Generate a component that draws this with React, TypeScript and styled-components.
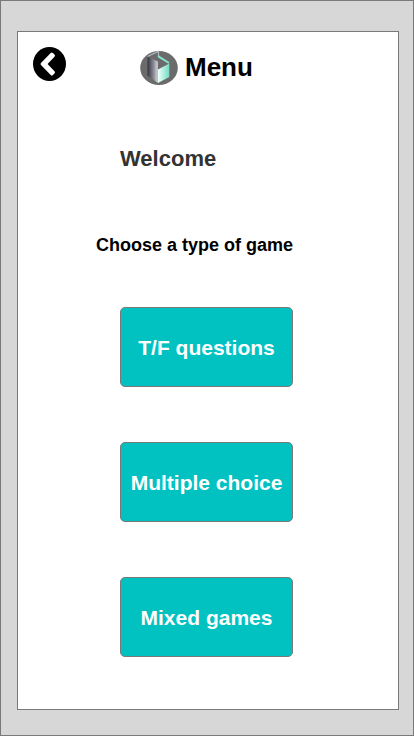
import React from "react";
import styled, { createGlobalStyle } from "styled-components";

const GlobalStyle = createGlobalStyle`
  * { box-sizing: border-box; }
  body { margin: 0; font-family: "Liberation Sans", Arial, sans-serif; }
`;

const Screen = styled.div`
  display: flex;
  width: 414px;
  height: 736px;
  padding: 30px 14px 25px 16px;
  border: 1px solid #797979;
  background: #d7d7d7;
`;

const Panel = styled.main`
  flex: 1;
  display: flex;
  flex-direction: column;
  border: 1px solid #797979;
  background: #fff;
`;

const Header = styled.header`
  display: flex;
  align-items: flex-start;
  height: 112px;
  padding: 14px 0 0 14px;
`;

const BackButton = styled.button`
  display: flex;
  margin: 0;
  padding: 0;
  border: 0;
  background: none;
`;

const Brand = styled.div`
  display: flex;
  align-items: flex-start;
  gap: 5px;
  margin: 4px 0 0 74px;
`;

const Title = styled.h1`
  margin: 2px 0 0;
  color: #000;
  font-size: 26px;
  line-height: 30px;
`;

const Welcome = styled.h2`
  margin: 2px 0 0 102px;
  color: #333;
  font-size: 22px;
  line-height: 25px;
`;

const Prompt = styled.p`
  margin: 64px 0 0 78px;
  color: #000;
  font-size: 18px;
  font-weight: 700;
  line-height: 20px;
`;

const GameList = styled.nav`
  display: flex;
  flex-direction: column;
  gap: 55px;
  margin: 52px 0 0 102px;
`;

const GameButton = styled.button`
  width: 173px;
  height: 80px;
  padding: 2px 0 0;
  border: 1px solid #797979;
  border-radius: 5px;
  background: #02c1c1;
  color: #fff;
  font: 700 21px/24px "Liberation Sans", Arial, sans-serif;
  white-space: nowrap;
`;

const games = ["T/F questions", "Multiple choice", "Mixed games"];

const BackIcon = () => (
  <svg width="34" height="36" viewBox="0 0 34 36">
    <ellipse cx="17.5" cy="18" rx="16.5" ry="17" fill="#000" />
    <path
      d="M18.7 6.9Q19.8 5.9 20.9 6.9L22.5 8.6Q23.5 9.6 22.5 10.7L15.6 18l6.9 7.3Q23.5 26.4 22.5 27.4L20.9 29.1Q19.8 30.1 18.7 29.1L9 19.1Q8 18 9 16.9Z"
      fill="#fff"
    />
  </svg>
);

const Logo = () => (
  <svg width="40" height="36" viewBox="0 0 40 36">
    <defs>
      <linearGradient id="side">
        <stop offset="0" stopColor="#343340" />
        <stop offset="0.6" stopColor="#8c8b98" />
        <stop offset="1" stopColor="#d8d8e2" />
      </linearGradient>
      <linearGradient id="front">
        <stop offset="0" stopColor="#effffa" />
        <stop offset="1" stopColor="#73dbc4" />
      </linearGradient>
    </defs>
    <ellipse cx="19" cy="18" rx="18.8" ry="17" fill="#6b6b6b" />
    <path d="M7.5 6.5 17.8 11.5V33L7.5 25.5Z" fill="url(#side)" />
    <path d="M18 19.5 29.3 13.5V27L18 33Z" fill="url(#front)" />
    <path d="M7.5 6.5 18.5 1.3V6" fill="none" stroke="#b9b9c5" strokeWidth="1.2" />
    <path d="M18 6.2 29 13" fill="none" stroke="#86e5cc" strokeWidth="2" />
  </svg>
);

export default function App() {
  return (
    <>
      <GlobalStyle />
      <Screen>
        <Panel>
          <Header>
            <BackButton aria-label="Back"><BackIcon /></BackButton>
            <Brand>
              <Logo />
              <Title>Menu</Title>
            </Brand>
          </Header>
          <Welcome>Welcome</Welcome>
          <Prompt>Choose a type of game</Prompt>
          <GameList>
            {games.map((game) => <GameButton key={game}>{game}</GameButton>)}
          </GameList>
        </Panel>
      </Screen>
    </>
  );
}
